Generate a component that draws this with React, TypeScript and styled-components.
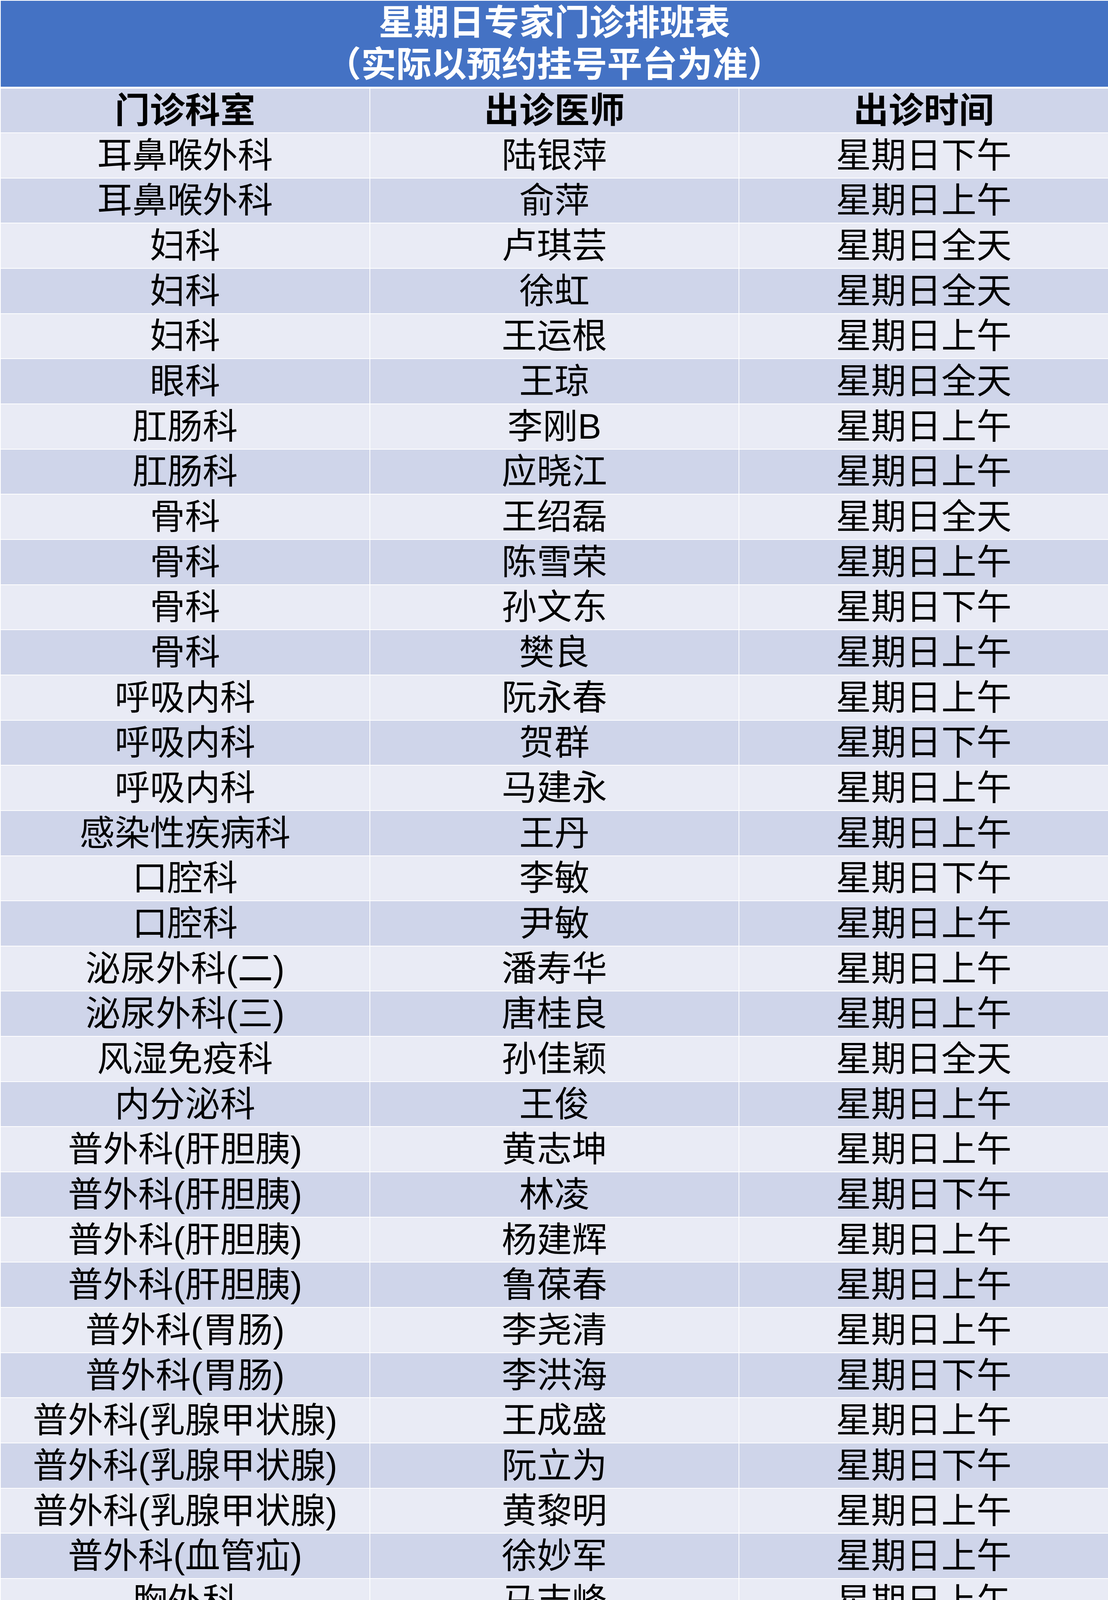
import styled, { createGlobalStyle } from "styled-components";

const GlobalStyle = createGlobalStyle`
  html, body {
    margin: 0;
    padding: 0;
    background: #ffffff;
  }
  body {
    font-family: "Liberation Sans", "Noto Sans CJK SC", sans-serif;
  }
`;

const Page = styled.div`
  width: 2837px;
  padding: 2px 0 0 2px;
  box-sizing: border-box;
  background: #ffffff;
`;

const Banner = styled.div`
  height: 220px;
  background: #4472c4;
  color: #ffffff;
  display: flex;
  flex-direction: column;
  align-items: center;
  justify-content: center;
  margin-bottom: 5px;
`;

const BannerLine = styled.div`
  font-size: 90px;
  font-weight: 700;
  line-height: 107px;
  white-space: nowrap;
`;

const Table = styled.div`
  display: flex;
  flex-direction: column;
  gap: 2px;
`;

const Row = styled.div<{ $head?: boolean }>`
  display: grid;
  grid-template-columns: repeat(3, 1fr);
  column-gap: 2px;
  height: ${(p) => (p.$head ? "112px" : "113.67px")};
`;

const Cell = styled.div<{ $alt?: boolean; $head?: boolean }>`
  background: ${(p) => (p.$alt ? "#e9ebf5" : "#cfd5ea")};
  color: #000000;
  display: flex;
  align-items: center;
  justify-content: center;
  font-size: 90px;
  line-height: 1;
  font-weight: ${(p) => (p.$head ? 700 : 400)};
  white-space: nowrap;
`;

type Item = [string, string, string];

const rows: Item[] = [
  ["耳鼻喉外科", "陆银萍", "星期日下午"],
  ["耳鼻喉外科", "俞萍", "星期日上午"],
  ["妇科", "卢琪芸", "星期日全天"],
  ["妇科", "徐虹", "星期日全天"],
  ["妇科", "王运根", "星期日上午"],
  ["眼科", "王琼", "星期日全天"],
  ["肛肠科", "李刚B", "星期日上午"],
  ["肛肠科", "应晓江", "星期日上午"],
  ["骨科", "王绍磊", "星期日全天"],
  ["骨科", "陈雪荣", "星期日上午"],
  ["骨科", "孙文东", "星期日下午"],
  ["骨科", "樊良", "星期日上午"],
  ["呼吸内科", "阮永春", "星期日上午"],
  ["呼吸内科", "贺群", "星期日下午"],
  ["呼吸内科", "马建永", "星期日上午"],
  ["感染性疾病科", "王丹", "星期日上午"],
  ["口腔科", "李敏", "星期日下午"],
  ["口腔科", "尹敏", "星期日上午"],
  ["泌尿外科(二)", "潘寿华", "星期日上午"],
  ["泌尿外科(三)", "唐桂良", "星期日上午"],
  ["风湿免疫科", "孙佳颖", "星期日全天"],
  ["内分泌科", "王俊", "星期日上午"],
  ["普外科(肝胆胰)", "黄志坤", "星期日上午"],
  ["普外科(肝胆胰)", "林凌", "星期日下午"],
  ["普外科(肝胆胰)", "杨建辉", "星期日上午"],
  ["普外科(肝胆胰)", "鲁葆春", "星期日上午"],
  ["普外科(胃肠)", "李尧清", "星期日上午"],
  ["普外科(胃肠)", "李洪海", "星期日下午"],
  ["普外科(乳腺甲状腺)", "王成盛", "星期日上午"],
  ["普外科(乳腺甲状腺)", "阮立为", "星期日下午"],
  ["普外科(乳腺甲状腺)", "黄黎明", "星期日上午"],
  ["普外科(血管疝)", "徐妙军", "星期日上午"],
  ["胸外科", "马志峰", "星期日上午"],
  ["神经内科", "王赵伟", "星期日上午"],
  ["神经内科", "朱仁洋", "星期日下午"],
  ["神经内科", "钟芳芳", "星期日上午"],
  ["神经内科", "魏博", "星期日下午"],
  ["神经外科", "包庆泉", "星期日上午"],
  ["神经外科", "王晓明", "星期日全天"],
  ["神经外科", "俞学斌", "星期日上午"],
  ["肾内科", "龚淑文", "星期日上午"],
  ["肾内科", "谢海英", "星期日上午"],
  ["肾内科", "沈水娟", "星期日下午"],
  ["疼痛科", "陈栋樑", "星期日上午"],
  ["肿瘤内科", "赵建国", "星期日上午"],
  ["放疗科", "徐俊", "星期日上午"],
  ["消化内科", "潘颖颖", "星期日上午"],
  ["小儿内科", "姚欢迎", "星期日上午"],
  ["小儿内科", "邵晓丽", "星期日上午"],
  ["小儿内科", "胡淑英", "星期日下午"],
  ["心血管内科", "孙勇", "星期日上午"],
  ["心血管内科", "许富康", "星期日上午"],
  ["心血管内科", "彭放", "星期日上午"],
  ["心血管内科", "徐步云", "星期日下午"],
  ["血液内科", "洪攀", "星期日下午"],
  ["血液内科", "封蔚莹", "星期日下午"],
  ["中医科", "徐晓晏", "星期日全天"],
  ["针灸科", "陈荣", "星期日上午"],
  ["超声科（心血管）", "诸磊", "星期日上午"],
  ["超声科（乳腺甲状腺）", "李星云", "星期日上午"],
  ["超声科（腹部）", "孙建明", "星期日上午"],
  ["放射科", "章俞", "星期日下午"],
  ["放射科", "倪瑞军", "星期日上午"],
  ["心理健康门诊", "叶兰英", "星期日下午"],
];

export default function App() {
  return (
    <>
      <GlobalStyle />
      <Page>
        <Banner>
          <BannerLine>星期日专家门诊排班表</BannerLine>
          <BannerLine>（实际以预约挂号平台为准）</BannerLine>
        </Banner>
        <Table>
          <Row $head>
            <Cell $head>门诊科室</Cell>
            <Cell $head>出诊医师</Cell>
            <Cell $head>出诊时间</Cell>
          </Row>
          {rows.map((r, i) => (
            <Row key={i}>
              {r.map((text, j) => (
                <Cell key={j} $alt={i % 2 === 0}>
                  {text}
                </Cell>
              ))}
            </Row>
          ))}
        </Table>
      </Page>
    </>
  );
}
